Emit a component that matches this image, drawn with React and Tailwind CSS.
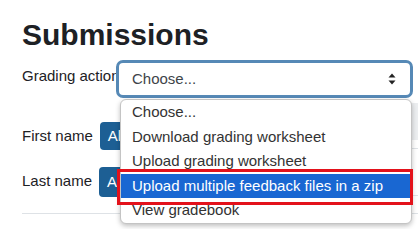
import React from 'react';

const OPTIONS = [
  'Choose...',
  'Download grading worksheet',
  'Upload grading worksheet',
  'Upload multiple feedback files in a zip',
  'View gradebook',
];

function SelectArrows() {
  return (
    <svg className="w-[8px] h-[12px]" viewBox="0 0 8 12" fill="#222">
      <path d="M4 0.5L7.5 4.5H0.5Z" />
      <path d="M4 11.5L7.5 7.5H0.5Z" />
    </svg>
  );
}

export default function App() {
  const active = 3;

  return (
    <div className="relative w-[418px] h-[229px] overflow-hidden bg-white text-[#1d2125] font-['Liberation_Sans',Arial,sans-serif]">
      {/* bits of the page peeking out on the right, behind the menu */}
      <div className="absolute right-0 top-[103px] w-[8px] h-[37px] bg-[#eceef0]" />
      <div className="absolute right-0 top-[148px] w-[8px] h-px bg-[#dee2e6]" />
      <div className="absolute right-0 top-[195px] w-[8px] h-px bg-[#dee2e6]" />

      <div className="pl-[22px] pt-[17px]">
        <h2 className="text-[30px] leading-[36px] font-bold">Submissions</h2>

        {/* Grading action */}
        <div className="mt-[7px] flex items-start">
          <label className="w-[94px] pt-[5px] text-[15px] leading-[22px] whitespace-nowrap">
            Grading action
          </label>
          <div className="relative z-10">
            <div className="w-[297px] h-[38px] flex items-center justify-between bg-white border-[3px] border-[#5689b6] rounded-[7px] pl-[13px] pr-[14px] text-[15px] text-[#3e4449]">
              <span>Choose...</span>
              <SelectArrows />
            </div>

            {/* open dropdown */}
            <div className="absolute left-[4px] top-[39px] w-[292px] bg-white border border-[#c4c4c4] rounded-[6px] shadow-[0_2px_5px_rgba(0,0,0,0.25)] overflow-hidden">
              {OPTIONS.map((opt, i) => (
                <div
                  key={opt}
                  className={`h-[24.5px] flex items-center pl-[11px] text-[15px] whitespace-nowrap ${
                    i === active ? 'bg-[#1967d2] text-white' : 'text-[#333]'
                  }`}
                >
                  {opt}
                </div>
              ))}
            </div>
          </div>
        </div>

        {/* Initials bars */}
        <div className="mt-[24px] flex items-start">
          <span className="mr-[7px] pt-[3px] text-[15px] leading-[22px]">First name</span>
          <div className="h-[28px] px-[8px] flex items-center rounded-[4px] bg-[#1d5f94] text-white text-[15px]">
            All
          </div>
        </div>
        <div className="mt-[17px] flex items-start">
          <span className="mr-[7px] pt-[3px] text-[15px] leading-[22px]">Last name</span>
          <div className="h-[30px] px-[8px] flex items-center rounded-[4px] bg-[#1d5f94] text-white text-[15px]">
            All
          </div>
        </div>

        <div className="mt-[16px] h-px bg-[#dee2e6]" />
      </div>

      {/* highlight annotation */}
      <div className="absolute left-[117px] top-[169px] w-[296px] h-[36px] border-[3px] border-[#e3121b] z-20" />
    </div>
  );
}
